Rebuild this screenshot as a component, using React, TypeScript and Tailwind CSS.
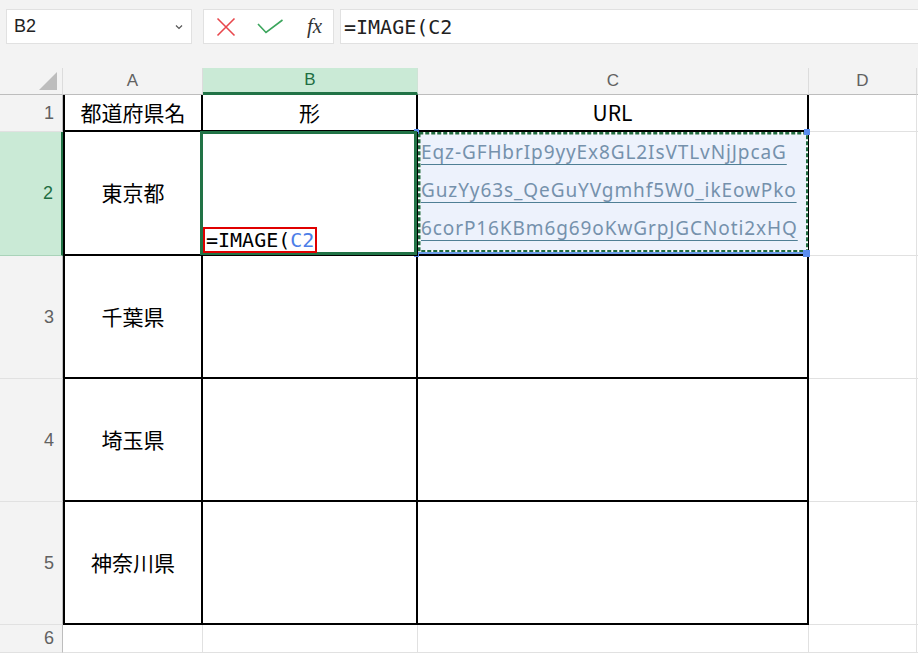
import React from "react";

const JP = "font-['Noto_Sans_CJK_JP','Noto_Sans',sans-serif]";
const UI = "font-['Liberation_Sans','Noto_Sans',sans-serif]";
const MONO = "font-['DejaVu_Sans_Mono','Liberation_Mono',monospace]";

const prefectures = ["東京都", "千葉県", "埼玉県", "神奈川県"];

const urlLines = [
  "Eqz-GFHbrIp9yyEx8GL2IsVTLvNjJpcaG",
  "GuzYy63s_QeGuYVgmhf5W0_ikEowPko",
  "6corP16KBm6g69oKwGrpJGCNoti2xHQ",
];

function TopBar() {
  return (
    <div className="h-[68px] bg-[#f3f3f3] flex items-start pt-[9px] pl-[6px]">
      <div className="w-[186px] h-[35px] bg-white border border-[#e1e1e1] flex items-center justify-between pl-[7px] pr-[8px]">
        <span className={`${UI} text-[18px] text-[#222]`}>B2</span>
        <svg width="8" height="6" viewBox="0 0 8 6">
          <path d="M1 1.5 L4 4.5 L7 1.5" fill="none" stroke="#555" strokeWidth="1.2" />
        </svg>
      </div>
      <div className="ml-[11px] w-[131px] h-[35px] bg-white border border-[#e1e1e1] flex items-center">
        <svg className="ml-[12px]" width="20" height="20" viewBox="0 0 20 20">
          <path d="M1.5 1.5 L18.5 18.5 M18.5 1.5 L1.5 18.5" stroke="#e8474c" strokeWidth="1.6" />
        </svg>
        <svg className="ml-[21px]" width="27" height="16" viewBox="0 0 27 16">
          <path d="M1 5 L9 13.5 L25.5 1" fill="none" stroke="#3ba55c" strokeWidth="1.6" />
        </svg>
        <span className="ml-[23px] font-['Liberation_Serif',serif] italic text-[21px] text-[#333] leading-none">
          fx
        </span>
      </div>
      <div className="ml-[6px] flex-1 h-[35px] bg-white border-y border-l border-[#e1e1e1] flex items-center pl-[3px]">
        <span className={`${MONO} text-[20px] text-[#222]`}>=IMAGE(C2</span>
      </div>
    </div>
  );
}

function ColHead({ label, active }: { label: string; active?: boolean }) {
  return (
    <div
      className={`${UI} flex items-center justify-center text-[17px] ${
        active
          ? "bg-[#caead6] text-[#1e6e42] border-b-[3px] border-b-[#217346] border-r border-r-[#cfe3d6]"
          : "bg-[#f3f3f3] text-[#616161] border-b border-b-[#bdbdbd] border-r border-r-[#dcdcdc]"
      }`}
    >
      {label}
    </div>
  );
}

function RowHead({ n, active }: { n: number; active?: boolean }) {
  return (
    <div
      className={`${UI} flex items-center justify-end pr-[8px] text-[18px] border-b ${
        active
          ? "bg-[#caead6] text-[#1e6e42] border-b-[#a9d3b9] border-r-2 border-r-[#217346]"
          : "bg-[#f3f3f3] text-[#616161] border-b-[#e1e1e1] border-r border-r-[#bdbdbd]"
      }`}
    >
      {n}
    </div>
  );
}

export default function App() {
  return (
    <div className="w-[918px] h-[653px] overflow-hidden bg-white">
      <TopBar />
      <div className="grid grid-cols-[63px_140px_215px_391px_108px_1fr] grid-rows-[27px_37px_124px_123px_123px_123px_28px]">
        {/* header row */}
        <div className="bg-[#f3f3f3] border-r border-r-[#dcdcdc] border-b border-b-[#bdbdbd] flex items-end justify-end pr-[5px] pb-[4px]">
          <svg width="18" height="18" viewBox="0 0 18 18">
            <path d="M18 0 L18 18 L0 18 Z" fill="#bdbdbd" />
          </svg>
        </div>
        <ColHead label="A" />
        <ColHead label="B" active />
        <ColHead label="C" />
        <ColHead label="D" />
        <div className="bg-[#f3f3f3] border-b border-b-[#bdbdbd]" />

        {/* row 1 */}
        <RowHead n={1} />
        <div className={`${JP} border-l-2 border-r-2 border-b-2 border-black flex items-center justify-center text-[21px] text-black`}>
          都道府県名
        </div>
        <div className={`${JP} border-r-2 border-b-2 border-black flex items-center justify-center text-[21px] text-black`}>
          形
        </div>
        <div className={`${JP} border-r-2 border-b-2 border-black flex items-center justify-center text-[21px] text-black`}>
          URL
        </div>
        <div className="border-r border-b border-[#e1e1e1]" />
        <div className="border-b border-[#e1e1e1]" />

        {/* rows 2-5 */}
        {prefectures.map((p, i) => (
          <React.Fragment key={p}>
            <RowHead n={i + 2} active={i === 0} />
            <div className={`${JP} border-l-2 border-r-2 border-b-2 border-black flex items-center justify-center text-[21px] text-black`}>
              {p}
            </div>
            {i === 0 ? (
              <div className="relative z-20 border-r-2 border-b-2 border-black">
                <div className="absolute -left-[3px] -top-[1px] -right-[1px] -bottom-[1px] border-[3px] border-[#217346]" />
                <div className="absolute left-0 bottom-[1px] h-[26px] border-2 border-[#e00000] bg-white flex items-center px-[1px]">
                  <span className={`${MONO} text-[20px] leading-none text-black`}>
                    =IMAGE(<span className="text-[#4d7ee8]">C2</span>
                  </span>
                </div>
              </div>
            ) : (
              <div className="border-r-2 border-b-2 border-black" />
            )}
            {i === 0 ? (
              <div className="relative z-10 border-r-2 border-b-2 border-black bg-[#edf2fc]">
                <div className="pl-[3px] pt-[1px] overflow-hidden h-full">
                  {urlLines.map((l) => (
                    <div
                      key={l}
                      className="whitespace-nowrap font-['Noto_Sans',sans-serif] text-[19px] tracking-[0.9px] leading-[38px] text-[#7591ac] underline decoration-[#4f7f95] underline-offset-[5px]"
                    >
                      {l}
                    </div>
                  ))}
                </div>
                <div className="absolute left-[0px] top-0 -right-[1px] bottom-[0px] border-b-2 border-[#6d9eeb]">
                  <svg className="w-full h-full" preserveAspectRatio="none">
                    <rect x="1.25" y="1.25" width="388" height="118" fill="none" stroke="#ffffff" strokeWidth="2.5" />
                    <rect
                      x="1.25"
                      y="1.25"
                      width="388"
                      height="118"
                      fill="none"
                      stroke="#1f6b3f"
                      strokeWidth="2.5"
                      strokeDasharray="4 2"
                    />
                  </svg>
                </div>
                <div className="absolute -left-[4px] -top-[3px] w-[5px] h-[5px] bg-[#5b8def]" />
                <div className="absolute -right-[3px] -top-[3px] w-[6px] h-[6px] bg-[#5b8def]" />
                <div className="absolute -left-[4px] -bottom-[3px] w-[5px] h-[5px] bg-[#5b8def]" />
                <div className="absolute -right-[3px] -bottom-[3px] w-[7px] h-[7px] bg-[#5b8def]" />
              </div>
            ) : (
              <div className="border-r-2 border-b-2 border-black" />
            )}
            <div className="border-r border-b border-[#e1e1e1]" />
            <div className="border-b border-[#e1e1e1]" />
          </React.Fragment>
        ))}

        {/* row 6 */}
        <RowHead n={6} />
        <div className="border-r border-b border-[#e1e1e1]" />
        <div className="border-r border-b border-[#e1e1e1]" />
        <div className="border-r border-b border-[#e1e1e1]" />
        <div className="border-r border-b border-[#e1e1e1]" />
        <div className="border-b border-[#e1e1e1]" />
      </div>
    </div>
  );
}
